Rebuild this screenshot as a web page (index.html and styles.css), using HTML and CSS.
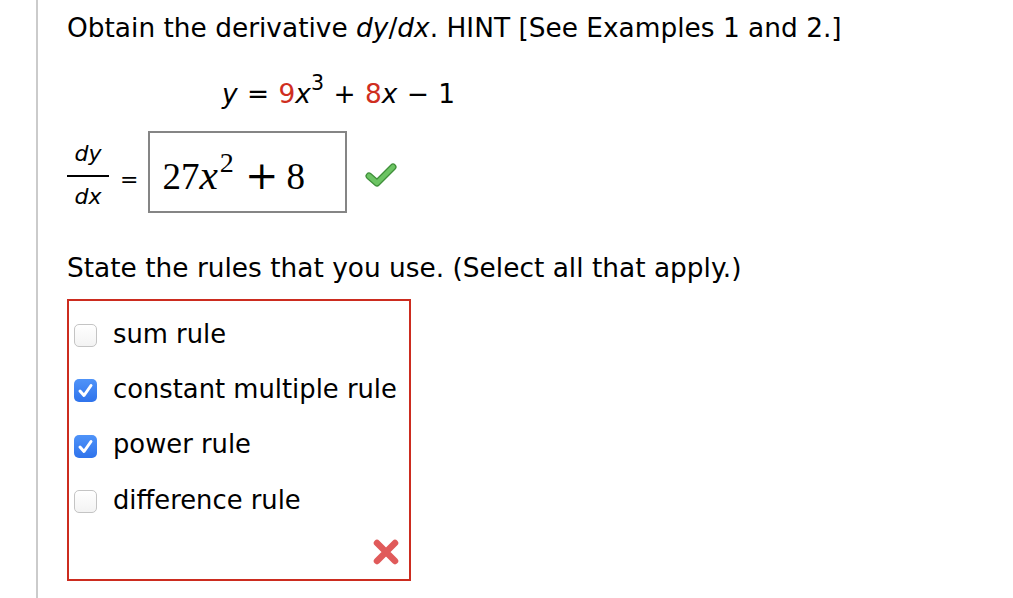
FILE: index.html
```html
<!DOCTYPE html>
<html>
<head>
<meta charset="utf-8">
<link rel="stylesheet" href="styles.css">
</head>
<body>
<div class="page">
  <p class="prompt">Obtain the derivative <i>dy</i>/<i>dx</i>. HINT [See Examples 1 and 2.]</p>
  <p class="equation"><i>y</i> = <span class="red">9</span><i>x</i><sup>3</sup> + <span class="red">8</span><i>x</i> &minus; 1</p>
  <div class="answer-row">
    <span class="fraction">
      <span class="num"><i>dy</i></span>
      <span class="bar"></span>
      <span class="den"><i>dx</i></span>
    </span>
    <span class="equals">=</span>
    <div class="answer-box"><span class="math">27<i class="var">x</i><sup>2</sup><span class="op">+</span>8</span></div>
    <svg class="check" viewBox="0 0 32 26" width="32" height="26">
      <path d="M4 14 L12 21 L28 5" fill="none" stroke="#3f8f3a" stroke-width="7" stroke-linecap="round" stroke-linejoin="round"/>
      <path d="M4 14 L12 21 L28 5" fill="none" stroke="#6cc463" stroke-width="4.5" stroke-linecap="round" stroke-linejoin="round"/>
    </svg>
  </div>
  <p class="state">State the rules that you use. (Select all that apply.)</p>
  <div class="choices">
    <label class="choice"><span class="box"></span><span>sum rule</span></label>
    <label class="choice"><span class="box checked"><svg viewBox="0 0 23 23" width="23" height="23"><path d="M6 12 L10 16.5 L17 6.5" fill="none" stroke="#fff" stroke-width="3" stroke-linecap="round" stroke-linejoin="round"/></svg></span><span>constant multiple rule</span></label>
    <label class="choice"><span class="box checked"><svg viewBox="0 0 23 23" width="23" height="23"><path d="M6 12 L10 16.5 L17 6.5" fill="none" stroke="#fff" stroke-width="3" stroke-linecap="round" stroke-linejoin="round"/></svg></span><span>power rule</span></label>
    <label class="choice"><span class="box"></span><span>difference rule</span></label>
    <div class="mark-row">
      <svg class="cross" viewBox="0 0 26 26" width="26" height="26">
        <path d="M4 4 L22 22 M22 4 L4 22" fill="none" stroke="#e05a5a" stroke-width="6.5" stroke-linecap="round"/>
      </svg>
    </div>
  </div>
</div>
</body>
</html>
```

FILE: styles.css
```css
html, body {
  margin: 0;
  padding: 0;
  background: #fff;
}
body {
  font-family: "DejaVu Sans", Verdana, sans-serif;
  color: #000;
}
.page {
  margin-left: 36px;
  border-left: 2px solid #cbcbcb;
  min-height: 598px;
  padding: 13px 0 0 29px;
  box-sizing: border-box;
}
p {
  margin: 0;
}
.prompt, .equation, .state {
  font-size: 26.4px;
  line-height: 30px;
}
.equation {
  margin-top: 36px;
  padding-left: 155px;
  word-spacing: 1px;
}
sup {
  font-size: 0.78em;
  line-height: 0;
  vertical-align: 0.62em;
}
.red {
  color: #cf2e1f;
}
.answer-row {
  margin-top: 22px;
  display: flex;
  align-items: flex-start;
  height: 82px;
}
.fraction {
  display: inline-flex;
  flex-direction: column;
  align-items: stretch;
  margin-top: 10px;
  font-size: 22px;
  text-align: center;
  padding: 0;
  width: 42px;
}
.num, .den {
  line-height: 26px;
}
.bar {
  height: 2px;
  background: #000;
  margin-top: 8px;
}
.den {
  margin-top: 7px;
}
.equals {
  font-size: 22px;
  line-height: 26px;
  margin: 36px 0 0 11px;
}
.answer-box {
  margin-left: 10px;
  width: 199px;
  height: 82px;
  box-sizing: border-box;
  border: 2px solid #858585;
  padding: 23px 0 0 12px;
}
.math {
  font-family: "Liberation Serif", "Times New Roman", serif;
  font-size: 37px;
  line-height: 42px;
  white-space: nowrap;
}
.math .var {
  font-size: 1.12em;
  line-height: 0;
}
.math sup {
  font-size: 0.76em;
  vertical-align: 0.6em;
  margin-left: 2px;
}
.op {
  font-family: "DejaVu Serif", serif;
  font-size: 40px;
  line-height: 0;
  margin: 0 8px 0 11px;
}
.check {
  margin: 31px 0 0 18px;
}
.state {
  margin-top: 40px;
}
.choices {
  margin-top: 16px;
  width: 344px;
  box-sizing: border-box;
  border: 2px solid #cc2c1f;
  padding: 7px 10px 14px 5px;
}
.choice {
  display: flex;
  align-items: center;
  height: 55.3px;
  font-size: 25.8px;
  gap: 16px;
}
.choice span:last-child {
  position: relative;
  top: -2px;
}
.box {
  width: 23px;
  height: 23px;
  box-sizing: border-box;
  border: 1px solid #c4c4c4;
  border-radius: 5px;
  background: linear-gradient(#ffffff, #f3f3f3);
  flex: none;
  display: block;
}
.box.checked {
  border: none;
  background: linear-gradient(#4f93f8, #2f73ec);
}
.box svg {
  display: block;
}
.mark-row {
  display: flex;
  justify-content: flex-end;
  margin-top: 10px;
}
.cross {
  display: block;
}
```
